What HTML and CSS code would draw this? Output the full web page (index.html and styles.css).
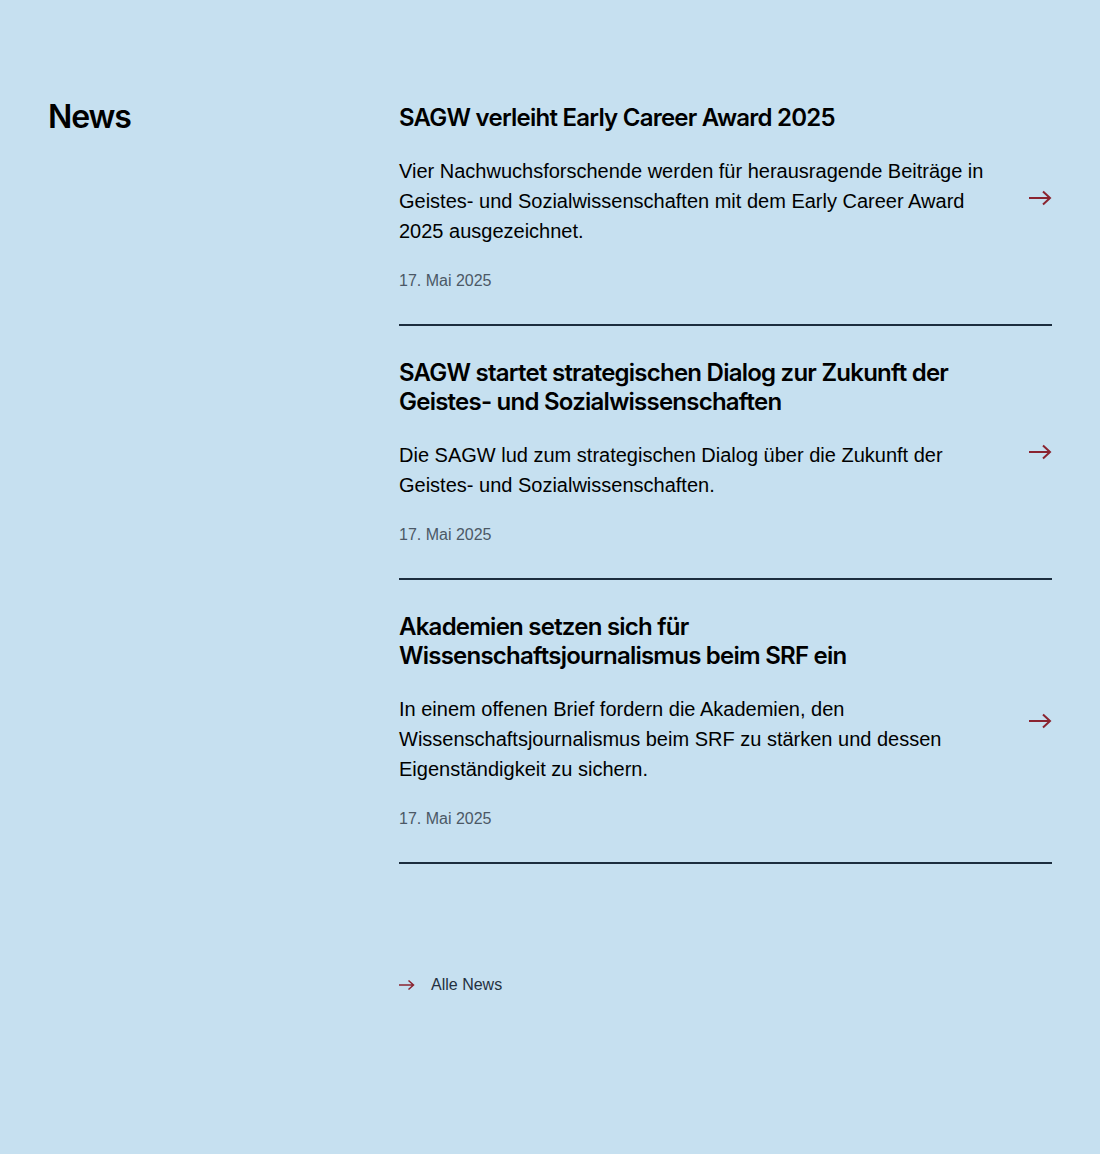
FILE: index.html
```html
<!DOCTYPE html>
<html lang="de">
<head>
<meta charset="utf-8">
<title>News</title>
<link rel="stylesheet" href="styles.css">
</head>
<body>
<section class="news">
  <h2 class="news-heading">News</h2>
  <div class="news-main">
    <ul class="news-list">
      <li class="news-item">
        <a class="news-link" href="#">
          <div class="news-text">
            <h3 class="news-title">SAGW verleiht Early Career Award 2025</h3>
            <p class="news-lead">Vier Nachwuchsforschende werden für herausragende Beiträge in Geistes- und Sozialwissenschaften mit dem Early Career Award 2025 ausgezeichnet.</p>
            <p class="news-date">17. Mai 2025</p>
          </div>
          <svg class="news-arrow" width="23" height="16" viewBox="0 0 23 16" aria-hidden="true"><path d="M0 8H21M14 1.5L21 8L14 14.5" fill="none" stroke="#8a2430" stroke-width="2"/></svg>
        </a>
      </li>
      <li class="news-item">
        <a class="news-link" href="#">
          <div class="news-text">
            <h3 class="news-title">SAGW startet strategischen Dialog zur Zukunft der Geistes- und Sozialwissenschaften</h3>
            <p class="news-lead">Die SAGW lud zum strategischen Dialog über die Zukunft der Geistes- und Sozialwissenschaften.</p>
            <p class="news-date">17. Mai 2025</p>
          </div>
          <svg class="news-arrow" width="23" height="16" viewBox="0 0 23 16" aria-hidden="true"><path d="M0 8H21M14 1.5L21 8L14 14.5" fill="none" stroke="#8a2430" stroke-width="2"/></svg>
        </a>
      </li>
      <li class="news-item">
        <a class="news-link" href="#">
          <div class="news-text">
            <h3 class="news-title">Akademien setzen sich für Wissenschaftsjournalismus beim SRF ein</h3>
            <p class="news-lead">In einem offenen Brief fordern die Akademien, den Wissenschaftsjournalismus beim SRF zu stärken und dessen Eigenständigkeit zu sichern.</p>
            <p class="news-date">17. Mai 2025</p>
          </div>
          <svg class="news-arrow" width="23" height="16" viewBox="0 0 23 16" aria-hidden="true"><path d="M0 8H21M14 1.5L21 8L14 14.5" fill="none" stroke="#8a2430" stroke-width="2"/></svg>
        </a>
      </li>
    </ul>
    <a class="all-news" href="#">
      <svg class="all-arrow" width="16" height="12" viewBox="0 0 16 12" aria-hidden="true"><path d="M0 6H14.5M9.5 1.5L14.5 6L9.5 10.5" fill="none" stroke="#8a2430" stroke-width="1.5"/></svg>
      <span>Alle News</span>
    </a>
  </div>
</section>
</body>
</html>
```

FILE: styles.css
```css
html, body {
  margin: 0;
  padding: 0;
  background: #c6e0f0;
}
body {
  font-family: "Liberation Sans", Arial, sans-serif;
  color: #000;
  min-height: 1154px;
}
.news {
  display: grid;
  grid-template-columns: 351px 653px;
  padding: 97px 48px 0 48px;
}
.news-heading {
  margin: 0;
  padding-top: 1px;
  font-family: Inter, "Noto Sans", sans-serif;
  font-size: 32px;
  font-weight: 600;
  line-height: 38px;
  letter-spacing: -1.1px;
}
.news-list {
  list-style: none;
  margin: 0;
  padding: 0;
}
.news-item {
  border-bottom: 2px solid #1c2d3e;
  padding: 6px 0 31px;
}
.news-item + .news-item {
  padding-top: 32px;
}
.news-link {
  display: flex;
  align-items: center;
  justify-content: space-between;
  gap: 20px;
  color: inherit;
  text-decoration: none;
}
.news-text {
  width: 600px;
}
.news-title {
  margin: 0;
  max-width: 585px;
  font-family: Inter, "Noto Sans", sans-serif;
  font-size: 24px;
  font-weight: 600;
  line-height: 29px;
  letter-spacing: -0.76px;
}
.news-lead {
  margin: 24px 0 0;
  font-size: 20px;
  line-height: 30px;
}
.news-date {
  margin: 23px 0 0;
  font-size: 16px;
  line-height: 24px;
  color: #4b5866;
}
.news-arrow {
  flex: none;
  display: block;
  margin-top: -1px;
}
.all-news {
  display: flex;
  align-items: center;
  gap: 16px;
  margin-top: 109px;
  color: #24313f;
  text-decoration: none;
  font-size: 16px;
  line-height: 24px;
}
.all-arrow {
  display: block;
}
```
